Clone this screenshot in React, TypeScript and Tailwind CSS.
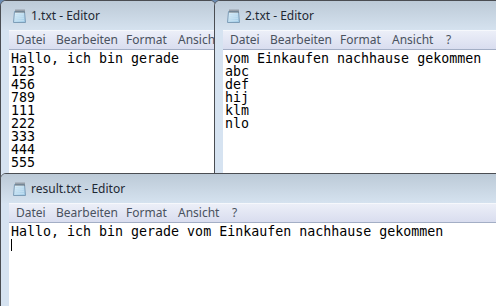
import React from 'react';

const MENU = [
  { label: 'Datei', w: 'w-[40px]' },
  { label: 'Bearbeiten', w: 'w-[70px]' },
  { label: 'Format', w: 'w-[52px]' },
  { label: 'Ansicht', w: 'w-[54px]' },
  { label: '?', w: 'w-[20px]' },
];

function NotepadIcon() {
  return (
    <svg width="15" height="15" viewBox="0 0 15 15" className="shrink-0">
      <defs>
        <linearGradient id="pg" x1="0" y1="0" x2="1" y2="1">
          <stop offset="0" stopColor="#e4f3fb" />
          <stop offset="1" stopColor="#9cc9e6" />
        </linearGradient>
      </defs>
      <path d="M2.5 3.5 H12.5 L13.5 14.5 H1.5 Z" fill="url(#pg)" stroke="#7d9db7" />
      <path d="M3.5 6.5 H11.5 M3.5 8.5 H11.5 M3 10.5 H12 M3 12.5 H12" stroke="#c4e0f1" strokeWidth="0.8" />
      <path d="M4 1.5 V5 M6 1.5 V5 M8 1.5 V5 M10 1.5 V5 M12 1.5 V5" stroke="#6b6f75" strokeWidth="1" />
    </svg>
  );
}

function EditorWindow({
  title,
  lines,
  cursor,
  menuItems = MENU.length,
  className,
}: {
  title: string;
  lines: string[];
  cursor?: boolean;
  menuItems?: number;
  className: string;
}) {
  return (
    <div
      className={`absolute flex flex-col overflow-hidden rounded-t-[6px] border border-[#4a4d52] bg-[#d6e3f1] ${className}`}
    >
      <div className="flex h-[29px] shrink-0 items-center gap-[4px] bg-gradient-to-b from-[#bccad7] to-[#d5e2ef] pl-[11px]">
        <NotepadIcon />
        <span className="font-['Noto_Sans',sans-serif] text-[12px] whitespace-nowrap text-[#1e2833]">{title}</span>
      </div>
      <div className="flex flex-1 flex-col pl-[8px]">
        <div className="flex h-[20px] shrink-0 items-center overflow-hidden border-t border-[#f6f8fc] border-b border-b-[#a3aec5] bg-gradient-to-b from-[#eceff8] to-[#d9ddef]">
          {MENU.slice(0, menuItems).map((m) => (
            <span
              key={m.label}
              className={`${m.w} shrink-0 pl-[7px] font-['Noto_Sans',sans-serif] text-[12px] whitespace-nowrap text-[#4a5260]`}
            >
              {m.label}
            </span>
          ))}
        </div>
        <div className="flex-1 bg-white pl-[2px] pt-[2px] font-['DejaVu_Sans_Mono',monospace] text-[13.3px] leading-[13px] text-black">
          {lines.map((l, i) => (
            <div key={i} className="whitespace-pre">
              {l}
            </div>
          ))}
          {cursor && <div className="mt-[1px] h-[12px] w-[1px] bg-black" />}
        </div>
      </div>
    </div>
  );
}

export default function App() {
  return (
    <div className="relative h-[306px] w-[496px] overflow-hidden bg-[#6b8bb0]">
      <EditorWindow
        className="left-0 top-0 h-[200px] w-[216px]"
        title="1.txt - Editor"
        menuItems={4}
        lines={['Hallo, ich bin gerade', '123', '456', '789', '111', '222', '333', '444', '555']}
      />
      <EditorWindow
        className="left-[214px] top-0 h-[200px] w-[300px]"
        title="2.txt - Editor"
        lines={['vom Einkaufen nachhause gekommen', 'abc', 'def', 'hij', 'klm', 'nlo']}
      />
      <EditorWindow
        className="left-0 top-[173px] h-[150px] w-[520px]"
        title="result.txt - Editor"
        lines={['Hallo, ich bin gerade vom Einkaufen nachhause gekommen']}
        cursor
      />
    </div>
  );
}
